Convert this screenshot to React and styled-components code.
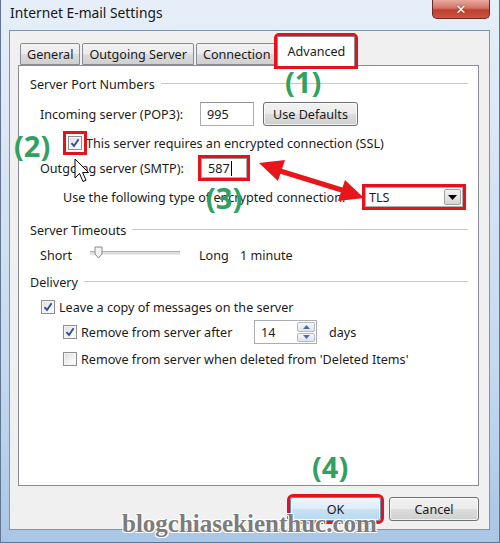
import styled, { createGlobalStyle } from "styled-components"

const GlobalStyle = createGlobalStyle`
  html, body {
    margin: 0;
    padding: 0;
    background: #ffffff;
  }
  body {
    font-family: "Noto Sans", "Open Sans", sans-serif;
    font-size: 12.6px;
    color: #1b1b1b;
  }
`

const Window = styled.div`
  position: relative;
  width: 500px;
  height: 543px;
  box-sizing: border-box;
  display: flex;
  flex-direction: column;
  padding: 0 9px 12px 8px;
  border: 1px solid #5f7591;
  border-top: none;
  background: linear-gradient(180deg, #e6eff9 0%, #d7e5f4 30%, #c3d8ef 70%, #a9c6e6 100%);
  overflow: hidden;
`

const TitleBar = styled.div`
  height: 30px;
  display: flex;
  align-items: flex-start;
  justify-content: space-between;
  flex-shrink: 0;
`

const Title = styled.div`
  padding: 3px 0 0 1px;
  font-size: 13.8px;
  color: #161616;
`

const CloseButton = styled.div`
  width: 56px;
  height: 18px;
  display: flex;
  align-items: center;
  justify-content: center;
  border: 1px solid #6d2b23;
  border-top: none;
  border-radius: 0 0 5px 5px;
  background: linear-gradient(180deg, #e7a99d 0%, #d27566 45%, #c0402e 55%, #c9553f 100%);
  color: #ffffff;
  font-family: "DejaVu Sans", sans-serif;
  font-weight: 700;
  font-size: 13px;
  text-shadow: 0 0 2px #6d2b23;
`

const Client = styled.div`
  flex: 1;
  display: flex;
  flex-direction: column;
  background: #f0f0f0;
  border: 1px solid #8094aa;
  padding: 4px 10px 8px 8px;
  min-height: 0;
`

const TabStrip = styled.div`
  height: 30px;
  display: flex;
  align-items: flex-end;
  gap: 2px;
  padding-left: 2px;
  position: relative;
  z-index: 1;
`

const Tab = styled.div`
  box-sizing: border-box;
  height: ${(p) => (p.$active ? "30px" : "22px")};
  margin: ${(p) => (p.$active ? "0 -1px -1px -2px" : "0")};
  padding: 0 ${(p) => (p.$active ? "9px" : "6px")};
  display: flex;
  align-items: center;
  border: 1px solid #898c95;
  border-bottom: ${(p) => (p.$active ? "none" : "1px solid #898c95")};
  border-radius: 2px 2px 0 0;
  background: ${(p) =>
    p.$active ? "#ffffff" : "linear-gradient(180deg, #f3f3f3 0%, #ebebeb 50%, #dddddd 51%, #cfcfcf 100%)"};
  outline: ${(p) => (p.$marked ? "3px solid #e3121b" : "none")};
  outline-offset: 0;
`

const TabPanel = styled.div`
  flex: 1;
  background: #ffffff;
  border: 1px solid #898c95;
  padding: 9px 10px 0 11px;
  display: flex;
  flex-direction: column;
`

const GroupHeader = styled.div`
  height: 18px;
  margin-top: ${(p) => p.$top || 0}px;
  display: flex;
  align-items: center;
  gap: 6px;
  white-space: nowrap;

  &::after {
    content: "";
    flex: 1;
    height: 1px;
    background: #c5c8cc;
    border-bottom: 1px solid #ffffff;
  }
`

const Row = styled.div`
  display: flex;
  align-items: center;
  height: ${(p) => p.$h || 18}px;
  margin-top: ${(p) => p.$top || 0}px;
  padding-left: ${(p) => p.$indent || 0}px;
  white-space: nowrap;
`

const Cell = styled.span`
  flex: 0 0 ${(p) => p.$w}px;
  margin-left: ${(p) => p.$left || 0}px;
  overflow: visible;
`

const TextBox = styled.div`
  box-sizing: border-box;
  width: ${(p) => p.$w}px;
  height: ${(p) => p.$h || 24}px;
  display: flex;
  align-items: center;
  padding-left: 6px;
  background: #ffffff;
  border: 1px solid #abadb3;
  border-top-color: #8e9197;
  outline: ${(p) => (p.$marked ? "3px solid #e3121b" : "none")};
`

const Caret = styled.span`
  display: inline-block;
  width: 1px;
  height: 15px;
  margin-left: 1px;
  background: #000000;
`

const Button = styled.div`
  box-sizing: border-box;
  width: ${(p) => p.$w}px;
  height: ${(p) => p.$h || 24}px;
  display: flex;
  align-items: center;
  justify-content: center;
  border: 1px solid ${(p) => (p.$default ? "#5b8fb8" : "#707070")};
  border-radius: 3px;
  background: ${(p) =>
    p.$default
      ? "linear-gradient(180deg, #edf6fc 0%, #dcedf8 50%, #c8e2f3 51%, #b9d9ee 100%)"
      : "linear-gradient(180deg, #f2f2f2 0%, #ebebeb 50%, #dddddd 51%, #cfcfcf 100%)"};
  box-shadow: inset 0 0 0 1px rgba(255, 255, 255, 0.7);
  outline: ${(p) => (p.$marked ? "3px solid #e3121b" : "none")};
  margin-left: ${(p) => p.$left || 0}px;
`

const Box = styled.div`
  box-sizing: border-box;
  width: 14px;
  height: 14px;
  flex-shrink: 0;
  display: flex;
  align-items: center;
  justify-content: center;
  border: 1px solid #8e8f8f;
  background: linear-gradient(135deg, #dcdcdc 0%, #f4f4f4 60%, #ffffff 100%);
  box-shadow: inset 0 0 0 1px #f4f4f4;
  margin-right: ${(p) => p.$gap || 5}px;
  outline: ${(p) => (p.$marked ? "3px solid #e3121b" : "none")};
  outline-offset: 2px;
`

const Select = styled.div`
  box-sizing: border-box;
  width: 98px;
  height: 20px;
  display: flex;
  align-items: center;
  justify-content: space-between;
  padding: 0 1px 0 3px;
  background: #ffffff;
  border: 1px solid #abadb3;
  outline: 3px solid #e3121b;
`

const DropArrow = styled.div`
  box-sizing: border-box;
  width: 17px;
  height: 16px;
  display: flex;
  align-items: center;
  justify-content: center;
  border: 1px solid #a3a3a3;
  border-radius: 2px;
  background: linear-gradient(180deg, #f3f3f3 0%, #e4e4e4 50%, #d5d5d5 100%);
`

const SliderTrack = styled.div`
  position: relative;
  width: 90px;
  height: 2px;
  margin-top: -4px;
  border-top: 1px solid #b0b0b0;
  border-bottom: 1px solid #e8e8e8;
  background: #dcdcdc;
`

const SliderThumb = styled.svg`
  position: absolute;
  left: 4px;
  top: -6px;
`

const Spin = styled.div`
  box-sizing: border-box;
  width: 63px;
  height: 24px;
  display: flex;
  align-items: stretch;
  background: #ffffff;
  border: 1px solid #abadb3;
  margin-right: 12px;
`

const SpinValue = styled.div`
  flex: 1;
  display: flex;
  align-items: center;
  padding-left: 6px;
`

const SpinButtons = styled.div`
  width: 18px;
  display: flex;
  flex-direction: column;
  gap: 1px;
  padding: 1px;
`

const SpinButton = styled.div`
  flex: 1;
  display: flex;
  align-items: center;
  justify-content: center;
  border: 1px solid #b5b9c2;
  border-radius: 2px;
  background: linear-gradient(180deg, #f6f7f9 0%, #dfe3ea 100%);
`

const ButtonRow = styled.div`
  display: flex;
  justify-content: flex-end;
  gap: 8px;
  margin-top: 11px;
  height: 24px;
`

const Step = styled.div`
  position: absolute;
  left: ${(p) => p.$x}px;
  top: ${(p) => p.$y}px;
  font-family: "Noto Sans", "DejaVu Sans", sans-serif;
  font-weight: 700;
  font-size: 29px;
  line-height: 1;
  color: #30a162;
  pointer-events: none;
`

const Overlay = styled.svg`
  position: absolute;
  left: ${(p) => p.$x}px;
  top: ${(p) => p.$y}px;
  pointer-events: none;
`

const Watermark = styled.div`
  position: absolute;
  left: 121px;
  top: 511px;
  font-family: "Liberation Serif", "DejaVu Serif", serif;
  font-weight: 700;
  font-size: 25px;
  line-height: 1;
  color: #7c7c7c;
  text-shadow: 1px 1px 0 #ffffff, -1px -1px 0 #ffffff, 1px -1px 0 #ffffff, -1px 1px 0 #ffffff;
  pointer-events: none;
`

const Check = () => (
  <svg width="10" height="10" viewBox="0 0 10 10">
    <path d="M1.5 5.2 L4 8 L8.6 1.2" fill="none" stroke="#2f4f9c" strokeWidth="1.9" />
  </svg>
)

const Checkbox = ({ checked, marked, gap }) => (
  <Box $marked={marked} $gap={gap}>
    {checked && <Check />}
  </Box>
)

const tabs = ["General", "Outgoing Server", "Connection", "Advanced"]

const App = () => {
  return (
    <>
      <GlobalStyle />
      <Window>
        <TitleBar>
          <Title>Internet E-mail Settings</Title>
          <CloseButton>✕</CloseButton>
        </TitleBar>

        <Client>
          <TabStrip>
            {tabs.map((t) => (
              <Tab key={t} $active={t === "Advanced"} $marked={t === "Advanced"}>
                {t}
              </Tab>
            ))}
          </TabStrip>

          <TabPanel>
            <GroupHeader>Server Port Numbers</GroupHeader>
            <Row $h={24} $top={9} $indent={10}>
              <Cell $w={160}>Incoming server (POP3):</Cell>
              <TextBox $w={54}>995</TextBox>
              <Button $w={95} $left={9}>Use Defaults</Button>
            </Row>
            <Row $top={8} $indent={38}>
              <Checkbox checked marked gap={4} />
              This server requires an encrypted connection (SSL)
            </Row>
            <Row $h={26} $top={3} $indent={10}>
              <Cell $w={161}>Outgoing server (SMTP):</Cell>
              <TextBox $w={46} $h={20} $marked>
                587<Caret />
              </TextBox>
            </Row>
            <Row $h={26} $top={3} $indent={33}>
              <Cell $w={302}>Use the following type of encrypted connection:</Cell>
              <Select>
                TLS
                <DropArrow>
                  <svg width="9" height="5" viewBox="0 0 9 5">
                    <path d="M0 0 H9 L4.5 5 Z" fill="#000" />
                  </svg>
                </DropArrow>
              </Select>
            </Row>

            <GroupHeader $top={11}>Server Timeouts</GroupHeader>
            <Row $top={7} $indent={10}>
              <Cell $w={50}>Short</Cell>
              <SliderTrack>
                <SliderThumb width="9" height="13" viewBox="0 0 9 13">
                  <path d="M1 1 H8 V8 L4.5 12 L1 8 Z" fill="#f4f4f4" stroke="#8a8a8a" />
                </SliderThumb>
              </SliderTrack>
              <Cell $w={41} $left={19}>Long</Cell>
              <span>1 minute</span>
            </Row>

            <GroupHeader $top={9}>Delivery</GroupHeader>
            <Row $top={7} $indent={11}>
              <Checkbox checked gap={4} />
              Leave a copy of messages on the server
            </Row>
            <Row $h={24} $top={4} $indent={33}>
              <Checkbox checked gap={4} />
              <Cell $w={173}>Remove from server after</Cell>
              <Spin>
                <SpinValue>14</SpinValue>
                <SpinButtons>
                  <SpinButton>
                    <svg width="7" height="4" viewBox="0 0 7 4">
                      <path d="M0 4 L3.5 0 L7 4 Z" fill="#4a6fa8" />
                    </svg>
                  </SpinButton>
                  <SpinButton>
                    <svg width="7" height="4" viewBox="0 0 7 4">
                      <path d="M0 0 L3.5 4 L7 0 Z" fill="#4a6fa8" />
                    </svg>
                  </SpinButton>
                </SpinButtons>
              </Spin>
              days
            </Row>
            <Row $top={6} $indent={33}>
              <Checkbox gap={4} />
              Remove from server when deleted from 'Deleted Items'
            </Row>
          </TabPanel>

          <ButtonRow>
            <Button $w={91} $default $marked>OK</Button>
            <Button $w={90}>Cancel</Button>
          </ButtonRow>
        </Client>

        <Step $x={284} $y={67}>(1)</Step>
        <Step $x={13} $y={131}>(2)</Step>
        <Step $x={205} $y={183}>(3)</Step>
        <Step $x={311} $y={452}>(4)</Step>

        <Overlay $x={250} $y={150} width="120" height="60" viewBox="250 150 120 60">
          <line x1="276" y1="170" x2="344" y2="191" stroke="#e8151b" strokeWidth="5" />
          <path d="M258 163 L284 160 L277 181 Z" fill="#e8151b" />
          <path d="M363 198 L337 201 L344 180 Z" fill="#e8151b" />
        </Overlay>

        <Overlay $x={73} $y={158} width="16" height="26" viewBox="0 0 16 26">
          <path
            d="M1 1 L1 20 L5.5 15.5 L9 23.5 L12 22.2 L8.6 14.6 L14.5 14.6 Z"
            fill="#ffffff"
            stroke="#000000"
            strokeWidth="1"
            strokeLinejoin="round"
          />
        </Overlay>

        <Watermark>blogchiasekienthuc.com</Watermark>
      </Window>
    </>
  )
}

export default App
